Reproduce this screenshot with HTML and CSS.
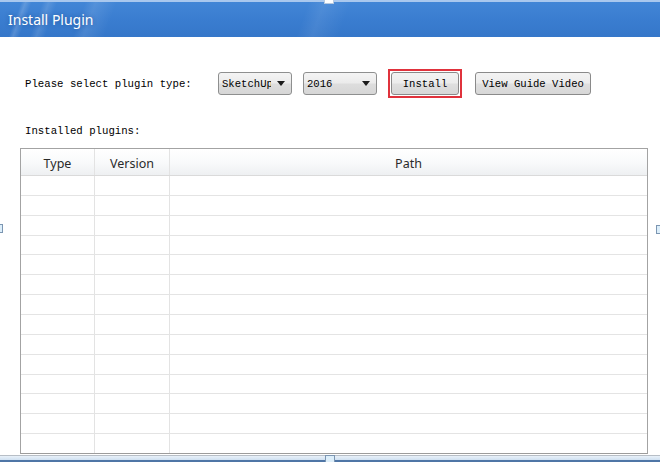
FILE: index.html
```html
<!DOCTYPE html>
<html>
<head>
<meta charset="utf-8">
<title>Install Plugin</title>
<link rel="stylesheet" href="styles.css">
</head>
<body>
<div class="window">
  <div class="titlebar"><span class="title">Install Plugin</span></div>
  <div class="content">
    <div class="toolbar">
      <span class="label">Please select plugin type:</span>
      <div class="combo combo-type"><span class="combo-text">SketchUp</span><span class="arrow"></span></div>
      <div class="combo combo-year"><span class="combo-text">2016</span><span class="arrow"></span></div>
      <div class="focus-ring"><button class="btn btn-install">Install</button></div>
      <button class="btn btn-video">View Guide Video</button>
    </div>
    <div class="label installed">Installed plugins:</div>
    <div class="grid">
      <div class="head">
        <div class="c c1">Type</div>
        <div class="c c2">Version</div>
        <div class="c c3">Path</div>
      </div>
      <div class="body">
        <div class="row"><div class="c c1"></div><div class="c c2"></div><div class="c c3"></div></div>
        <div class="row"><div class="c c1"></div><div class="c c2"></div><div class="c c3"></div></div>
        <div class="row"><div class="c c1"></div><div class="c c2"></div><div class="c c3"></div></div>
        <div class="row"><div class="c c1"></div><div class="c c2"></div><div class="c c3"></div></div>
        <div class="row"><div class="c c1"></div><div class="c c2"></div><div class="c c3"></div></div>
        <div class="row"><div class="c c1"></div><div class="c c2"></div><div class="c c3"></div></div>
        <div class="row"><div class="c c1"></div><div class="c c2"></div><div class="c c3"></div></div>
        <div class="row"><div class="c c1"></div><div class="c c2"></div><div class="c c3"></div></div>
        <div class="row"><div class="c c1"></div><div class="c c2"></div><div class="c c3"></div></div>
        <div class="row"><div class="c c1"></div><div class="c c2"></div><div class="c c3"></div></div>
        <div class="row"><div class="c c1"></div><div class="c c2"></div><div class="c c3"></div></div>
        <div class="row"><div class="c c1"></div><div class="c c2"></div><div class="c c3"></div></div>
        <div class="row"><div class="c c1"></div><div class="c c2"></div><div class="c c3"></div></div>
        <div class="row last"><div class="c c1"></div><div class="c c2"></div><div class="c c3"></div></div>
      </div>
    </div>
  </div>
  <div class="frame-bottom"></div>
  <span class="handle h-top"></span>
  <span class="handle h-left"></span>
  <span class="handle h-right"></span>
  <span class="handle h-bottom"></span>
</div>
</body>
</html>
```

FILE: styles.css
```css
html, body {
  margin: 0;
  padding: 0;
  background: #ffffff;
}

.window {
  position: relative;
  width: 660px;
  height: 462px;
  overflow: hidden;
  background: #ffffff;
  display: flex;
  flex-direction: column;
}

.titlebar {
  height: 37px;
  flex: none;
  box-sizing: border-box;
  border-top: 2px solid #a9c8ee;
  background:
    linear-gradient(110deg, rgba(255,255,255,0) 0px, rgba(255,255,255,0) 20px, rgba(255,255,255,0.16) 24px, rgba(255,255,255,0) 30px, rgba(255,255,255,0) 40px, rgba(255,255,255,0.12) 46px, rgba(255,255,255,0) 54px, rgba(255,255,255,0) 80px, rgba(255,255,255,0.10) 90px, rgba(255,255,255,0) 110px, rgba(255,255,255,0) 290px, rgba(255,255,255,0.08) 305px, rgba(255,255,255,0) 330px),
    linear-gradient(180deg, #4286d6 0%, #3a7dd0 50%, #3577c9 100%);
  display: flex;
  align-items: center;
  padding-left: 8px;
  padding-bottom: 1px;
}

.title {
  font-family: "Noto Sans", "Open Sans", sans-serif;
  font-size: 14px;
  color: #ffffff;
  text-shadow: 0 0 4px rgba(20, 50, 110, 0.45);
}

.content {
  flex: 1;
  display: flex;
  flex-direction: column;
  padding: 35px 12px 0 20px;
}

.label {
  font-family: "Liberation Mono", "DejaVu Sans Mono", monospace;
  font-size: 10.7px;
  color: #000000;
}

.toolbar {
  display: flex;
  align-items: center;
  height: 23px;
  padding-left: 5px;
}

.toolbar .label {
  width: 193px;
  flex: none;
}

.combo {
  box-sizing: border-box;
  width: 74px;
  height: 23px;
  border: 1px solid #8e8f8f;
  border-radius: 3px;
  background: linear-gradient(180deg, #f4f4f4 0%, #ebebeb 48%, #dddddd 52%, #d6d6d6 100%);
  display: flex;
  align-items: center;
  padding: 0 4px 0 3px;
  flex: none;
}

.combo-text {
  font-family: "Liberation Mono", "DejaVu Sans Mono", monospace;
  font-size: 10.6px;
  color: #000000;
  width: 49px;
  overflow: hidden;
  white-space: nowrap;
  flex: none;
}

.arrow {
  margin-left: auto;
  width: 0;
  height: 0;
  border-left: 4px solid transparent;
  border-right: 4px solid transparent;
  border-top: 5px solid #1a1a1a;
  margin-right: 2px;
}

.combo-year {
  margin-left: 11px;
}

.focus-ring {
  box-sizing: border-box;
  margin-left: 11px;
  width: 74px;
  height: 29px;
  border: 2px solid #e0323c;
  padding: 1px;
  display: flex;
  flex: none;
}

.btn {
  box-sizing: border-box;
  height: 23px;
  border: 1px solid #8a8a8a;
  border-radius: 3px;
  background: linear-gradient(180deg, #f3f3f3 0%, #ececec 48%, #dfdfdf 52%, #d7d7d7 100%);
  font-family: "Liberation Mono", "DejaVu Sans Mono", monospace;
  font-size: 10.6px;
  color: #000000;
  padding: 0;
  margin: 0;
}

.btn-install {
  width: 100%;
  height: 100%;
}

.btn-video {
  margin-left: 13px;
  width: 116px;
  flex: none;
}

.installed {
  margin-top: 29px;
  padding-left: 5px;
  height: 14px;
  line-height: 14px;
}

.grid {
  margin-top: 10px;
  width: 628px;
  height: 306px;
  box-sizing: border-box;
  border: 1px solid #a3a3a3;
  border-bottom-color: #9c9c9c;
  display: flex;
  flex-direction: column;
}

.head {
  display: flex;
  height: 27px;
  flex: none;
  box-sizing: border-box;
  border-bottom: 1px solid #dadada;
  background: linear-gradient(180deg, #ffffff 0%, #f9fafb 50%, #eef0f2 100%);
}

.head .c {
  font-family: "Noto Sans", "Open Sans", sans-serif;
  font-size: 12.5px;
  color: #2a2a2a;
  display: flex;
  align-items: center;
  justify-content: center;
  padding-top: 2px;
}

.c {
  box-sizing: border-box;
  border-right: 1px solid #e3e3e3;
}

.c1 { width: 74px; flex: none; }
.c2 { width: 75px; flex: none; }
.c3 { flex: 1; border-right: none; }

.body {
  flex: 1;
  display: flex;
  flex-direction: column;
}

.row {
  flex: 1;
  display: flex;
  box-sizing: border-box;
  border-bottom: 1px solid #e4e4e4;
}

.row.last {
  border-bottom: none;
}

.frame-bottom {
  flex: none;
  height: 7px;
  box-sizing: border-box;
  margin-top: 1px;
  border-top: 1px solid #b7bec6;
  border-bottom: 2px solid #4f76a6;
  background: linear-gradient(180deg, #e9f1f9, #cfe0f1);
}

.handle {
  position: absolute;
  box-sizing: border-box;
  background: #dceefa;
  border: 1px solid #7c96b2;
}

.h-top {
  left: 324px;
  top: -2px;
  width: 10px;
  height: 6px;
  background: #ffffff;
  border-color: #b7c9de;
}

.h-bottom {
  left: 325px;
  top: 455px;
  width: 10px;
  height: 8px;
}

.h-left {
  left: -3px;
  top: 224px;
  width: 6px;
  height: 9px;
}

.h-right {
  left: 656px;
  top: 225px;
  width: 7px;
  height: 9px;
}
```
